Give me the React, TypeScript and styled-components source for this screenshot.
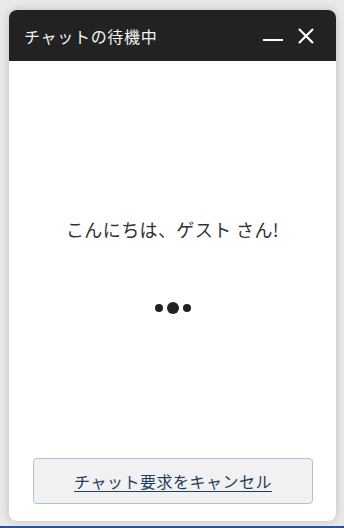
import React from "react";
import styled, { createGlobalStyle } from "styled-components";

const Global = createGlobalStyle`
  html, body { margin: 0; padding: 0; }
  body {
    background: #e9e9e9;
    font-family: "Noto Sans CJK JP", "Noto Sans", sans-serif;
  }
`;

const Page = styled.div`
  width: 344px;
  height: 528px;
  display: flex;
  flex-direction: column;
  box-sizing: border-box;
  padding: 10px 8px 0 9px;
  overflow: hidden;
`;

const Panel = styled.div`
  width: 327px;
  height: 511px;
  background: #ffffff;
  border-radius: 8px;
  box-shadow: 0 0 8px rgba(0, 0, 0, 0.18);
  display: flex;
  flex-direction: column;
  overflow: hidden;
`;

const Header = styled.div`
  height: 51px;
  background: #222222;
  display: flex;
  align-items: center;
  padding: 0 22px 0 15px;
  color: #ffffff;
  flex-shrink: 0;
`;

const Title = styled.div`
  flex: 1;
  font-size: 16px;
  letter-spacing: 0.7px;
  color: #f4f4f4;
`;

const IconButton = styled.button<{ $gap?: number }>`
  background: none;
  border: none;
  padding: 0;
  margin-left: ${(p) => p.$gap ?? 0}px;
  display: flex;
  align-items: center;
  justify-content: center;
  color: #ffffff;
  cursor: pointer;
`;

const Body = styled.div`
  flex: 1;
  display: flex;
  flex-direction: column;
  align-items: center;
`;

const Greeting = styled.div`
  margin-top: 155px;
  font-size: 18px;
  line-height: 26px;
  letter-spacing: 0.4px;
  color: #333333;
`;

const Dots = styled.div`
  margin-top: 60px;
  display: flex;
  align-items: center;
  gap: 4px;
  margin-left: 1px;
`;

const Dot = styled.span<{ $size: number }>`
  width: ${(p) => p.$size}px;
  height: ${(p) => p.$size}px;
  border-radius: 50%;
  background: #222222;
`;

const Footer = styled.div`
  padding: 0 23px 17px 24px;
`;

const CancelButton = styled.button`
  width: 100%;
  height: 46px;
  background: #f1f1f1;
  border: 1px solid #a9c3da;
  border-radius: 4px;
  font-family: "Noto Sans CJK JP", "Noto Sans", sans-serif;
  font-size: 16px;
  letter-spacing: 0.5px;
  color: #1d3e60;
  text-decoration: underline;
  text-underline-offset: 3px;
  cursor: pointer;
`;

const BottomBar = styled.div`
  margin-top: auto;
  margin-left: -9px;
  margin-right: -8px;
  height: 2px;
  background: #2d4f96;
`;

export default function App() {
  return (
    <>
      <Global />
      <Page>
        <Panel>
          <Header>
            <Title>チャットの待機中</Title>
            <IconButton aria-label="minimize">
              <svg width="20" height="20" viewBox="0 0 20 20">
                <rect x="0" y="13" width="20" height="2" fill="#ffffff" />
              </svg>
            </IconButton>
            <IconButton aria-label="close" $gap={15}>
              <svg width="16" height="16" viewBox="0 0 16 16">
                <path d="M1 1 L15 15 M15 1 L1 15" stroke="#ffffff" strokeWidth="2.2" />
              </svg>
            </IconButton>
          </Header>
          <Body>
            <Greeting>こんにちは、ゲスト さん!</Greeting>
            <Dots>
              <Dot $size={8} />
              <Dot $size={12} />
              <Dot $size={8} />
            </Dots>
          </Body>
          <Footer>
            <CancelButton>チャット要求をキャンセル</CancelButton>
          </Footer>
        </Panel>
        <BottomBar />
      </Page>
    </>
  );
}
